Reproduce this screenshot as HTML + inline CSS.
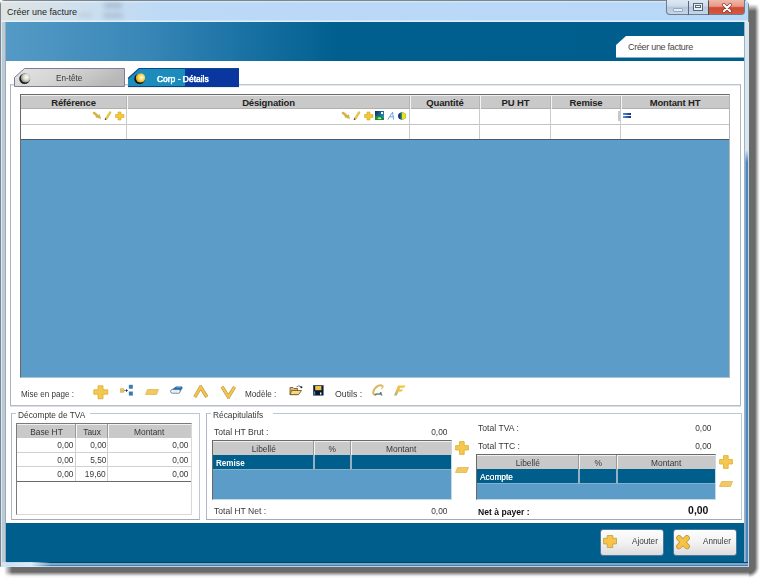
<!DOCTYPE html>
<html><head><meta charset="utf-8">
<style>
*{margin:0;padding:0;box-sizing:border-box}
html,body{width:760px;height:580px;overflow:hidden;background:#fff;font-family:"Liberation Sans",sans-serif;font-size:9px;color:#383838;position:relative}
.a{position:absolute}
.t{position:absolute;white-space:nowrap;line-height:11px;font-size:9.5px;letter-spacing:0}
.s{display:inline-block}
.b{font-weight:bold;letter-spacing:0;color:#222}
/* frame */
#shR{left:749px;top:4px;width:11px;height:563px;-webkit-mask-image:linear-gradient(180deg,transparent 0,#000 7px);background:linear-gradient(90deg,#6a6a6a 0,#6a6a6a 6px,#b0b0b0 8px,#f0f0f0 10px,#fff 11px)}
#shC{left:749px;top:567px;width:11px;height:11px;background:radial-gradient(circle at 0 0,#6a6a6a 0,#6a6a6a 6px,#b0b0b0 8px,#f0f0f0 10px,#fff 11px)}
#shB{left:4px;top:567px;width:745px;height:11px;background:linear-gradient(180deg,#6a6a6a 0,#6a6a6a 5px,#b0b0b0 7px,#f0f0f0 9px,#fff 11px);-webkit-mask-image:linear-gradient(90deg,transparent 0,#000 8px)}
#win{left:0;top:0;width:749px;height:567px;background:#c4d8ea;border:1px solid #7c8690;border-radius:4px 5px 0 0}
#title{left:1px;top:1px;width:747px;height:21px;background:linear-gradient(180deg,rgba(255,255,255,.5) 0,rgba(255,255,255,0) 2px,rgba(255,255,255,0) 19px,rgba(235,245,255,.8) 20px),linear-gradient(90deg,#dfe4e2 0%,#cfe0ee 10%,#bcd9f6 22%,#b8d8f8 100%)}
#frL{left:1px;top:22px;width:5px;height:545px;background:linear-gradient(90deg,#dce6ee 0,#dce6ee 1px,#b8ccd8 1px,#b8ccd8 4px,#a0a8b8 4px)}
#frR{left:744px;top:22px;width:5px;height:545px;background:linear-gradient(90deg,#a0b0c0 0,#a0b0c0 1px,rgba(0,0,0,0) 1px),linear-gradient(180deg,#d8e6f2 0,#d8e6f2 128px,rgba(216,230,242,0) 140px),linear-gradient(90deg,#8aa0b8 0,#8aa0b8 1px,#80a8d0 1px,#80a8d0 2px,#4a88c0 2px,#4a88c0 4px,#c0d8e8 4px)}
#frB{left:1px;top:562px;width:747px;height:5px;border-radius:0 0 0 3px;background:linear-gradient(90deg,rgba(214,228,238,1) 0,rgba(214,228,238,1) 5px,rgba(220,236,250,.85) 6px,rgba(230,244,255,.9) 30px,rgba(210,230,248,0) 50px),linear-gradient(180deg,#0a4060 0,#0a4060 1px,#78aad0 1px,#78aad0 3px,#4a80b0 3px,#4a80b0 4px,#b8d4f0 4px)}
#client{left:6px;top:22px;width:738px;height:540px;background:#fff}
#hdr{left:6px;top:22px;width:738px;height:39px;background:linear-gradient(90deg,#559ac6 0%,#3a88b8 18%,#1a72a4 32%,#005f8e 45%,#005e8d 100%)}
#foot{left:6px;top:523px;width:738px;height:39px;background:#005e8c}
.btnw{top:0;height:15px;border:1px solid #6e7c8c;border-top:none}
</style></head><body>
<div class="a" id="shR"></div>
<div class="a" id="shB"></div><div class="a" id="shC"></div>
<div class="a" id="win"></div>
<div class="a" id="title"></div>
<div class="a" id="frL"></div>
<div class="a" style="left:104px;top:3px;width:18px;height:5px;background:#6a7a90;filter:blur(2.5px);opacity:.35"></div><div class="a" style="left:103px;top:13px;width:20px;height:5px;background:#6a7a90;filter:blur(2.5px);opacity:.3"></div><div class="a" style="left:78px;top:13px;width:14px;height:4px;background:#8a9aaa;filter:blur(2.5px);opacity:.25"></div>
<div class="a" id="frR"></div>
<div class="a" id="frB"></div>
<div class="t" style="left:7px;top:7px;font-size:9px;letter-spacing:0;color:#1e1e1e">Créer une facture</div>
<!-- caption buttons -->
<div class="a btnw" style="left:666px;width:23px;border-radius:0 0 0 4px;background:linear-gradient(180deg,#dfe9f4 0%,#cbdaea 45%,#b4c8de 50%,#c4d6ea 100%)"></div>
<div class="a" style="left:673px;top:8px;width:10px;height:4px;background:#e4ecf4;border:1px solid #9aaabe;border-radius:1px"></div>
<div class="a btnw" style="left:688px;width:21px;border-left:none;background:linear-gradient(180deg,#dfe9f4 0%,#cbdaea 45%,#b4c8de 50%,#c4d6ea 100%)"></div>
<div class="a" style="left:693px;top:3px;width:10px;height:8px;border:1px solid #596878;background:#e6eef6"></div>
<div class="a" style="left:695px;top:5px;width:6px;height:3px;border:1px solid #596878;background:#fff"></div>
<div class="a btnw" style="left:708px;width:37px;border-radius:0 0 4px 0;background:linear-gradient(180deg,#f0b8a8 0%,#e8988a 45%,#d04a32 55%,#d45a40 100%)"></div>
<div class="a" style="left:688px;top:1px;width:1px;height:14px;background:#5a6878"></div><div class="a" style="left:708px;top:1px;width:1px;height:14px;background:#4a4a58"></div>
<svg class="a" style="left:722px;top:3px" width="10" height="10" viewBox="0 0 10 10"><path d="M1.8 1.8 L8.2 8.2 M8.2 1.8 L1.8 8.2" stroke="#6a3028" stroke-width="3.4" stroke-linecap="round" opacity=".8"/><path d="M1.8 1.8 L8.2 8.2 M8.2 1.8 L1.8 8.2" stroke="#fff" stroke-width="2" stroke-linecap="round"/></svg>

<div class="a" id="client"></div>
<div class="a" id="hdr"></div>
<svg class="a" style="left:616px;top:36px" width="128" height="22" viewBox="0 0 128 22"><path d="M0 9 L10 0 L128 0 L128 21.5 L0 21.5 Z" fill="#fff"/></svg>
<div class="t" style="left:628px;top:42px;font-size:9px;color:#4a4444;letter-spacing:-0.3px">Créer une facture</div>
<div class="a" id="foot"></div>

<!-- tab panel border -->
<div class="a" style="left:10px;top:84px;width:731px;height:322px;border:1px solid #a8b4c4;border-top-color:#bcc8d4;border-bottom-color:#b8bcc8;box-shadow:0 1px 0 #dcdee6, inset 0 1px 0 #e4e8ee"></div>
<!-- tabs -->
<svg class="a" style="left:13px;top:67px" width="114" height="22" viewBox="0 0 114 22">
 <defs><linearGradient id="gt" x1="0" y1="0" x2="1" y2=".3"><stop offset="0" stop-color="#e4e4e4"/><stop offset=".5" stop-color="#d4d4d4"/><stop offset="1" stop-color="#b8b8b8"/></linearGradient>
 <radialGradient id="bg1" cx=".6" cy=".42" r=".7"><stop offset="0" stop-color="#fffff4"/><stop offset=".45" stop-color="#d8d8d0"/><stop offset="1" stop-color="#707070"/></radialGradient></defs>
 <path d="M1.5 10.5 L11.5 1.5 L111.5 1.5 L111.5 19.5 L1.5 19.5 Z" fill="url(#gt)" stroke="#7c7c9c" stroke-width="1"/>
 <circle cx="12" cy="11.3" r="5.6" fill="#c8c8c4" opacity=".6"/>
 <circle cx="11.6" cy="11.8" r="5.3" fill="#1a1a1a"/>
 <circle cx="12.5" cy="10.9" r="4.7" fill="url(#bg1)"/>
</svg>
<div class="t" style="left:56px;top:72px;color:#3a3a3a"><span class="s" style="transform:scaleX(0.86);transform-origin:left">En-tête</span></div>
<svg class="a" style="left:127px;top:67px" width="114" height="22" viewBox="0 0 114 22">
 <defs><radialGradient id="bg2" cx=".6" cy=".45" r=".65"><stop offset="0" stop-color="#fffef0"/><stop offset=".4" stop-color="#fce070"/><stop offset="1" stop-color="#d09010"/></radialGradient></defs>
 <path d="M1 11.5 L12 1.5 L58 1.5 L58 20 L1 20 Z" fill="#1b8cbc"/>
 <path d="M58 1.5 L112 1.5 L112 20 L58 20 Z" fill="#0a36a0"/>
 <path d="M1 11.5 L12 1.5 L112 1.5" stroke="#0a4a8a" stroke-width="1.1" fill="none"/>
 <path d="M1 19.6 L112 19.6" stroke="#0a3a80" stroke-width="1" fill="none"/>
 <circle cx="12.6" cy="11.8" r="5.3" fill="#101010"/>
 <circle cx="13.5" cy="10.9" r="4.7" fill="url(#bg2)"/>
</svg>
<div class="t" style="left:157px;top:73px;color:#fff;font-size:9.5px;text-shadow:0 0 1px #a0d8ff,0 0 .5px #fff"><span class="s" style="transform:scaleX(0.89);transform-origin:left;-webkit-text-stroke:.25px #fff">Corp - Détails</span></div>

<!-- main table -->
<div class="a" style="left:20px;top:94px;width:710px;height:284px;background:#5b9dc8;border:1px solid #6a6a6a;border-right-color:#b4b4b4;border-bottom-color:#a8c4d8"></div>
<div class="a" style="left:21px;top:95px;width:708px;height:14px;background:#c9c9c9;border-top:1px solid #f0f0f0;border-bottom:1px solid #b0b0b0"></div>
<div class="a" style="left:21px;top:109px;width:708px;height:30px;background:#fff"></div>
<div class="a" style="left:21px;top:124px;width:708px;height:1px;background:#c4c4c4"></div>
<div class="a" style="left:21px;top:139px;width:708px;height:1px;background:#4a5a66"></div>
<div class="a" style="left:126px;top:96px;width:1px;height:13px;background:#b4b4b4"></div><div class="a" style="left:127px;top:96px;width:1px;height:13px;background:#f4f4f4"></div>
<div class="a" style="left:126px;top:109px;width:1px;height:30px;background:#cccccc"></div>
<div class="a" style="left:409px;top:96px;width:1px;height:13px;background:#b4b4b4"></div><div class="a" style="left:410px;top:96px;width:1px;height:13px;background:#f4f4f4"></div>
<div class="a" style="left:409px;top:109px;width:1px;height:30px;background:#cccccc"></div>
<div class="a" style="left:479px;top:96px;width:1px;height:13px;background:#b4b4b4"></div><div class="a" style="left:480px;top:96px;width:1px;height:13px;background:#f4f4f4"></div>
<div class="a" style="left:479px;top:109px;width:1px;height:30px;background:#cccccc"></div>
<div class="a" style="left:550px;top:96px;width:1px;height:13px;background:#b4b4b4"></div><div class="a" style="left:551px;top:96px;width:1px;height:13px;background:#f4f4f4"></div>
<div class="a" style="left:550px;top:109px;width:1px;height:30px;background:#cccccc"></div>
<div class="a" style="left:620px;top:96px;width:1px;height:13px;background:#b4b4b4"></div><div class="a" style="left:621px;top:96px;width:1px;height:13px;background:#f4f4f4"></div>
<div class="a" style="left:620px;top:109px;width:1px;height:30px;background:#cccccc"></div>
<div class="t b" style="left:20px;top:96.5px;width:107px;text-align:center;font-size:9.5px;letter-spacing:-0.15px">Référence</div>
<div class="t b" style="left:127px;top:96.5px;width:283px;text-align:center;font-size:9.5px;letter-spacing:-0.15px">Désignation</div>
<div class="t b" style="left:410px;top:96.5px;width:70px;text-align:center;font-size:9.5px;letter-spacing:-0.15px">Quantité</div>
<div class="t b" style="left:480px;top:96.5px;width:71px;text-align:center;font-size:9.5px;letter-spacing:-0.15px">PU HT</div>
<div class="t b" style="left:551px;top:96.5px;width:70px;text-align:center;font-size:9.5px;letter-spacing:-0.15px">Remise</div>
<div class="t b" style="left:621px;top:96.5px;width:108px;text-align:center;font-size:9.5px;letter-spacing:-0.15px">Montant HT</div>

<!-- row icons -->
<svg class="a" style="left:92px;top:111px" width="34" height="10" viewBox="0 0 34 10">
 <path d="M2 2 Q3.5 2.5 5 4.8" stroke="#d4b448" stroke-width="2.6" fill="none" stroke-linecap="round"/>
 <path d="M3.8 6 L7.5 3.6 L8.6 7.6 Z" fill="#d8b848" stroke="#c8a030" stroke-width=".5" stroke-linejoin="round"/>
 <path d="M18 1.6 L14.2 7.6" stroke="#e8c040" stroke-width="2.6" stroke-linecap="round"/><path d="M17 1.6 L13.6 7" stroke="#f4e090" stroke-width=".7"/>
 <path d="M13.2 8.8 L13.8 7.5" stroke="#223366" stroke-width="1.2"/>
 <path d="M26 1 H29 V3.5 H32 V6.5 H29 V9 H26 V6.5 H23.5 V3.5 H26 Z" fill="#f0c838" stroke="#d8a820" stroke-width=".6"/>
</svg>
<svg class="a" style="left:341px;top:110px" width="66" height="11" viewBox="0 0 66 11">
 <path d="M2 3 Q3.5 3.5 5 5.8" stroke="#d4b448" stroke-width="2.6" fill="none" stroke-linecap="round"/>
 <path d="M3.8 7 L7.5 4.6 L8.6 8.6 Z" fill="#d8b848" stroke="#c8a030" stroke-width=".5" stroke-linejoin="round"/>
 <path d="M18 2.6 L14.2 8.6" stroke="#e8c040" stroke-width="2.6" stroke-linecap="round"/><path d="M17 2.6 L13.6 8" stroke="#f4e090" stroke-width=".7"/>
 <path d="M13.2 9.8 L13.8 8.5" stroke="#223366" stroke-width="1.2"/>
 <path d="M26 2 H29 V4.5 H32 V7.5 H29 V10 H26 V7.5 H23.5 V4.5 H26 Z" fill="#f0c838" stroke="#d8a820" stroke-width=".6"/>
 <defs><linearGradient id="ig" x1="0" y1="0" x2="1" y2=".6"><stop offset="0" stop-color="#0a2a5a"/><stop offset="1" stop-color="#2a90c0"/></linearGradient></defs><rect x="34" y="1" width="9" height="9" fill="url(#ig)"/>
 <path d="M34 10 V6.5 C36 5 38 5.5 43 8 V10 Z" fill="#1a8a3a"/><ellipse cx="38.5" cy="8.3" rx="2" ry="1" fill="#a8e0a0"/>
 <rect x="40" y="2" width="2" height="2" fill="#fff"/>
 <path d="M46.8 9.6 L51.6 2.2 L52.6 9.6 M48.8 6.8 L52.3 6.8" stroke="#5a9ad8" stroke-width=".9" fill="none"/>
 <ellipse cx="61" cy="6" rx="4" ry="3.6" fill="#1a2a9a"/>
 <path d="M61 2.4 A4 3.6 0 0 1 61 9.6 Z" fill="#e8e020"/>
 <path d="M59.5 2.6 L61 2.4 L61 9.6 L59.5 9.3 Z" fill="#2a9a30"/>
</svg>
<div class="a" style="left:618px;top:111px;width:2px;height:10px;background:#c8c8c8"></div>
<div class="a" style="left:623px;top:113px;width:8px;height:2px;background:linear-gradient(90deg,#4a9ad8,#1a2a7a)"></div>
<div class="a" style="left:623px;top:116px;width:8px;height:2px;background:linear-gradient(90deg,#4a9ad8,#1a2a7a)"></div>

<!-- toolbar -->
<div class="t" style="left:21px;top:388px"><span class="s" style="transform:scaleX(0.85);transform-origin:left">Mise en page :</span></div>
<svg class="a" style="left:93px;top:385px" width="16" height="15" viewBox="0 0 16 15">
 <path d="M5 .8 H10 V4.8 H14.8 V9.2 H10 V13.8 H5 V9.2 H.8 V4.8 H5 Z" fill="#f4c850" stroke="#e0ac30" stroke-width=".8"/>
</svg>
<svg class="a" style="left:120px;top:384px" width="14" height="12" viewBox="0 0 14 12">
 <rect x="9" y="1" width="3.8" height="3.6" fill="#3a7aaa" stroke="#5a90b8" stroke-width=".4"/><rect x="9" y="7.8" width="3.8" height="3.6" fill="#3a7aaa" stroke="#5a90b8" stroke-width=".4"/>
 <rect x=".5" y="4.8" width="3.4" height="3.4" fill="#e8c060" stroke="#c8a040" stroke-width=".5"/>
 <path d="M4 6.5 H7" stroke="#6a7a9a" stroke-width=".8"/><path d="M6 5 L8 6.5 L6 8 Z" fill="#101a60"/>
</svg>
<svg class="a" style="left:145px;top:389px" width="14" height="6" viewBox="0 0 14 6"><path d="M2.5 .5 H13.5 L11.5 5.5 H.5 Z" fill="#f4c860" stroke="#d8a838" stroke-width=".6"/></svg>
<svg class="a" style="left:170px;top:386px" width="13" height="8" viewBox="0 0 13 8">
 <path d="M2 3.5 L6 .4 H11.8 Q13 .8 12.4 2.4 L10 5.5 L9 6 Z" fill="#2a6cac"/><path d="M6.5 1.2 H11" stroke="#7ab0e0" stroke-width=".8"/>
 <path d="M2.5 3.4 H9 Q10.2 3.4 10.2 5 Q10.2 7.2 8.8 7.2 H2.5 Q.6 7.2 .6 5.3 Q.6 3.4 2.5 3.4 Z" fill="#f8fafc" stroke="#4a6a90" stroke-width=".8"/>
 <path d="M3 5 H8" stroke="#c8d4e0" stroke-width=".8"/>
</svg>
<svg class="a" style="left:193px;top:385px" width="16" height="14" viewBox="0 0 16 14"><path d="M1.8 12.2 L7.7 2 L13.8 12" stroke="#b09040" stroke-width="3.4" fill="none" stroke-linejoin="miter" stroke-miterlimit="3"/><path d="M1.8 12.2 L7.7 2 L13.8 12" stroke="#f4c450" stroke-width="2.4" fill="none" stroke-linejoin="miter" stroke-miterlimit="3"/></svg>
<svg class="a" style="left:220px;top:385px" width="16" height="14" viewBox="0 0 16 14"><path d="M2 1.6 L8.4 12 L14.6 1.8" stroke="#b09040" stroke-width="3.4" fill="none" stroke-linejoin="miter" stroke-miterlimit="3"/><path d="M2 1.6 L8.4 12 L14.6 1.8" stroke="#f4c450" stroke-width="2.4" fill="none" stroke-linejoin="miter" stroke-miterlimit="3"/></svg>
<div class="t" style="left:245px;top:388px"><span class="s" style="transform:scaleX(0.86);transform-origin:left">Modèle :</span></div>
<svg class="a" style="left:289px;top:385px" width="14" height="11" viewBox="0 0 14 11">
 <path d="M1 2.5 H4 L5 3.5 H8.5 V9.6 H1 Z" fill="#e0b860" stroke="#6a5020" stroke-width=".8"/>
 <path d="M2.6 5.5 H12.5 L9.6 9.6 H1 Z" fill="#f4d888" stroke="#6a5020" stroke-width=".8" stroke-linejoin="round"/>
 <path d="M7.5 2 Q9.5 -.2 12 1.6" stroke="#555" stroke-width=".8" fill="none"/>
 <circle cx="12.4" cy="2.3" r="1" fill="#101830"/>
</svg>
<svg class="a" style="left:313px;top:385px" width="11" height="11" viewBox="0 0 11 11">
 <rect x=".3" y=".3" width="10" height="10" fill="#0a1830" stroke="#2a4a6a" stroke-width=".5"/>
 <rect x="2.2" y="1" width="6.2" height="4.2" fill="#f4c040"/>
 <rect x="1" y="6.4" width="1.2" height="3.4" fill="#3a90b0"/>
 <rect x="7" y="7.4" width="1.4" height="2.2" fill="#e8f0f4"/>
</svg>
<div class="t" style="left:335px;top:388px"><span class="s" style="transform:scaleX(0.92);transform-origin:left">Outils :</span></div>
<svg class="a" style="left:371px;top:384px" width="14" height="13" viewBox="0 0 14 13">
 <path d="M11.5 2.2 Q10 .4 7 1.8 Q3 4 2.2 8 Q2 10.6 4.5 10.8" stroke="#d8b860" stroke-width="1.9" fill="none" stroke-linecap="round"/>
 <path d="M11.8 2 Q12.2 3.5 10.6 4.6" stroke="#e0c070" stroke-width="1.4" fill="none" stroke-linecap="round"/>
 <path d="M4.2 10.6 Q6 9.2 8 10.2 Q9.5 9.6 10 8.2 V10.8 L11 11" stroke="#4a7060" stroke-width="1.2" fill="none" stroke-linecap="round"/>
</svg>
<svg class="a" style="left:393px;top:385px" width="13" height="11" viewBox="0 0 13 11">
 <defs><linearGradient id="fg" x1="1" y1="0" x2="0" y2="1"><stop offset="0" stop-color="#f8c830"/><stop offset=".55" stop-color="#e8c050"/><stop offset="1" stop-color="#a8a890"/></linearGradient></defs>
 <path d="M5 .5 H12.5 L11.3 2.8 H7.2 L6.5 4.4 H10 L8.9 6.5 H5.7 L3.8 10.5 H1 Z" fill="url(#fg)"/>
</svg>

<!-- group boxes -->
<div class="a" style="left:11px;top:413px;width:189px;height:107px;border:1px solid #b8c8d8;border-bottom-color:#a8a8b0;border-left-color:#b0b8c4"></div>
<div class="a" style="left:16px;top:409px;width:74px;height:10px;background:#fff"></div>
<div class="t" style="left:18px;top:408.5px"><span class="s" style="transform:scaleX(0.877);transform-origin:left">Décompte de TVA</span></div>
<div class="a" style="left:206px;top:413px;width:536px;height:107px;border:1px solid #b8c8d8;border-bottom-color:#a8a8b0;border-left-color:#b0b8c4"></div>
<div class="a" style="left:211px;top:409px;width:62px;height:10px;background:#fff"></div>
<div class="t" style="left:213px;top:408.5px"><span class="s" style="transform:scaleX(0.88);transform-origin:left">Récapitulatifs</span></div>

<!-- TVA table -->
<div class="a" style="left:16px;top:423px;width:176px;height:92px;background:#fff;border:1px solid #7a7a7a;border-right-color:#d8d8d8;border-bottom-color:#d8d8d8"></div>
<div class="a" style="left:17px;top:424px;width:174px;height:14px;background:#c9c9c9;border-top:1px solid #f0f0f0"></div>
<div class="a" style="left:17px;top:452px;width:174px;height:1px;background:#d0d0d0"></div>
<div class="a" style="left:17px;top:466px;width:174px;height:1px;background:#d0d0d0"></div>
<div class="a" style="left:17px;top:481px;width:174px;height:1px;background:#6a6a6a"></div>
<div class="a" style="left:75px;top:424px;width:1px;height:14px;background:#9a9a9a"></div><div class="a" style="left:76px;top:424px;width:1px;height:14px;background:#f4f4f4"></div>
<div class="a" style="left:75px;top:438px;width:1px;height:43px;background:#d0d0d0"></div>
<div class="a" style="left:107px;top:424px;width:1px;height:14px;background:#9a9a9a"></div><div class="a" style="left:108px;top:424px;width:1px;height:14px;background:#f4f4f4"></div>
<div class="a" style="left:107px;top:438px;width:1px;height:43px;background:#d0d0d0"></div>
<div class="t" style="left:17px;top:425.5px;width:59px;text-align:center"><span class="s" style="transform:scaleX(0.88);transform-origin:center">Base HT</span></div>
<div class="t" style="left:76px;top:425.5px;width:32px;text-align:center"><span class="s" style="transform:scaleX(0.88);transform-origin:center">Taux</span></div>
<div class="t" style="left:108px;top:425.5px;width:83px;text-align:center"><span class="s" style="transform:scaleX(0.88);transform-origin:center">Montant</span></div>
<div class="t" style="left:17px;top:439px;width:56px;text-align:right"><span class="s" style="transform:scaleX(0.88);transform-origin:right">0,00</span></div><div class="t" style="left:76px;top:439px;width:30px;text-align:right"><span class="s" style="transform:scaleX(0.88);transform-origin:right">0,00</span></div><div class="t" style="left:108px;top:439px;width:80px;text-align:right"><span class="s" style="transform:scaleX(0.88);transform-origin:right">0,00</span></div>
<div class="t" style="left:17px;top:453.5px;width:56px;text-align:right"><span class="s" style="transform:scaleX(0.88);transform-origin:right">0,00</span></div><div class="t" style="left:76px;top:453.5px;width:30px;text-align:right"><span class="s" style="transform:scaleX(0.88);transform-origin:right">5,50</span></div><div class="t" style="left:108px;top:453.5px;width:80px;text-align:right"><span class="s" style="transform:scaleX(0.88);transform-origin:right">0,00</span></div>
<div class="t" style="left:17px;top:468px;width:56px;text-align:right"><span class="s" style="transform:scaleX(0.88);transform-origin:right">0,00</span></div><div class="t" style="left:76px;top:468px;width:30px;text-align:right"><span class="s" style="transform:scaleX(0.88);transform-origin:right">19,60</span></div><div class="t" style="left:108px;top:468px;width:80px;text-align:right"><span class="s" style="transform:scaleX(0.88);transform-origin:right">0,00</span></div>

<!-- recap left -->
<div class="t" style="left:214px;top:426px"><span class="s" style="transform:scaleX(0.9);transform-origin:left">Total HT Brut :</span></div>
<div class="t" style="left:400px;top:426px;width:47px;text-align:right"><span class="s" style="transform:scaleX(0.88);transform-origin:right">0,00</span></div>
<div class="a" style="left:212px;top:440px;width:240px;height:60px;background:#5b9dc8;border:1px solid #6a6a6a;border-right-color:#c8d8e4;border-bottom-color:#c8d8e4"></div>
<div class="a" style="left:213px;top:441px;width:238px;height:14px;background:#c9c9c9;border-top:1px solid #f0f0f0"></div>
<div class="a" style="left:213px;top:455px;width:238px;height:15px;background:#005e8c;border-bottom:1px solid #8ab0c8"></div>
<div class="t" style="left:213px;top:442.5px;width:101px;text-align:center"><span class="s" style="transform:scaleX(0.88);transform-origin:center">Libellé</span></div>
<div class="t" style="left:314px;top:442.5px;width:37px;text-align:center"><span class="s" style="transform:scaleX(0.88);transform-origin:center">%</span></div>
<div class="t" style="left:351px;top:442.5px;width:100px;text-align:center"><span class="s" style="transform:scaleX(0.88);transform-origin:center">Montant</span></div>
<div class="t b" style="left:216px;top:456.5px;color:#fff"><span class="s" style="transform:scaleX(0.85);transform-origin:left">Remise</span></div>
<div class="t" style="left:214px;top:505px"><span class="s" style="transform:scaleX(0.9);transform-origin:left">Total HT Net :</span></div>
<div class="t" style="left:400px;top:505px;width:47px;text-align:right"><span class="s" style="transform:scaleX(0.88);transform-origin:right">0,00</span></div>
<div class="a" style="left:313px;top:441px;width:1px;height:14px;background:#9a9a9a"></div><div class="a" style="left:314px;top:441px;width:1px;height:14px;background:#f4f4f4"></div>
<div class="a" style="left:313px;top:455px;width:2px;height:14px;background:#98b0c4"></div>
<div class="a" style="left:350px;top:441px;width:1px;height:14px;background:#9a9a9a"></div><div class="a" style="left:351px;top:441px;width:1px;height:14px;background:#f4f4f4"></div>
<div class="a" style="left:350px;top:455px;width:2px;height:14px;background:#98b0c4"></div>

<svg class="a" style="left:455px;top:441px" width="14" height="14" viewBox="0 0 14 14"><path d="M4.5 .6 H9.2 V4.6 H13.4 V9 H9.2 V13.4 H4.5 V9 H.6 V4.6 H4.5 Z" fill="#f4c850" stroke="#e0ac30" stroke-width=".8"/></svg>
<svg class="a" style="left:455px;top:467px" width="14" height="6" viewBox="0 0 14 6"><path d="M2.5 .5 H13.5 L11.5 5.5 H.5 Z" fill="#f4c860" stroke="#d8a838" stroke-width=".6"/></svg>

<!-- recap right -->
<div class="t" style="left:478px;top:421.5px"><span class="s" style="transform:scaleX(0.905);transform-origin:left">Total TVA :</span></div>
<div class="t" style="left:660px;top:421.5px;width:51px;text-align:right"><span class="s" style="transform:scaleX(0.88);transform-origin:right">0,00</span></div>
<div class="t" style="left:478px;top:439.5px"><span class="s" style="transform:scaleX(0.905);transform-origin:left">Total TTC :</span></div>
<div class="t" style="left:660px;top:439.5px;width:51px;text-align:right"><span class="s" style="transform:scaleX(0.88);transform-origin:right">0,00</span></div>
<div class="a" style="left:476px;top:454px;width:240px;height:46px;background:#5b9dc8;border:1px solid #6a6a6a;border-right-color:#c8d8e4;border-bottom-color:#c8d8e4"></div>
<div class="a" style="left:477px;top:455px;width:238px;height:14px;background:#c9c9c9;border-top:1px solid #f0f0f0"></div>
<div class="a" style="left:477px;top:469px;width:238px;height:15px;background:#005e8c;border-bottom:1px solid #8ab0c8"></div>
<div class="t" style="left:477px;top:456.5px;width:102px;text-align:center"><span class="s" style="transform:scaleX(0.88);transform-origin:center">Libellé</span></div>
<div class="t" style="left:579px;top:456.5px;width:38px;text-align:center"><span class="s" style="transform:scaleX(0.88);transform-origin:center">%</span></div>
<div class="t" style="left:617px;top:456.5px;width:98px;text-align:center"><span class="s" style="transform:scaleX(0.88);transform-origin:center">Montant</span></div>
<div class="t" style="left:480px;top:471px;color:#fff;text-shadow:0 0 .5px #fff"><span class="s" style="transform:scaleX(0.88);transform-origin:left">Acompte</span></div>
<div class="t b" style="left:478px;top:505.5px;color:#111"><span class="s" style="transform:scaleX(0.905);transform-origin:left">Net à payer :</span></div>
<div class="t b" style="left:650px;top:505px;width:58px;text-align:right;color:#111;font-size:11px"><span class="s" style="transform:scaleX(0.95);transform-origin:right">0,00</span></div>
<div class="a" style="left:578px;top:455px;width:1px;height:14px;background:#9a9a9a"></div><div class="a" style="left:579px;top:455px;width:1px;height:14px;background:#f4f4f4"></div>
<div class="a" style="left:578px;top:469px;width:2px;height:14px;background:#98b0c4"></div>
<div class="a" style="left:616px;top:455px;width:1px;height:14px;background:#9a9a9a"></div><div class="a" style="left:617px;top:455px;width:1px;height:14px;background:#f4f4f4"></div>
<div class="a" style="left:616px;top:469px;width:2px;height:14px;background:#98b0c4"></div>

<svg class="a" style="left:719px;top:455px" width="14" height="14" viewBox="0 0 14 14"><path d="M4.5 .6 H9.2 V4.6 H13.4 V9 H9.2 V13.4 H4.5 V9 H.6 V4.6 H4.5 Z" fill="#f4c850" stroke="#e0ac30" stroke-width=".8"/></svg>
<svg class="a" style="left:719px;top:481px" width="14" height="6" viewBox="0 0 14 6"><path d="M2.5 .5 H13.5 L11.5 5.5 H.5 Z" fill="#f4c860" stroke="#d8a838" stroke-width=".6"/></svg>

<!-- footer buttons -->
<div class="a" style="left:600px;top:529px;width:64px;height:27px;border-radius:3px;background:linear-gradient(180deg,#fdfdfd 0%,#f2f2f2 50%,#dcdcdc 100%);border:1px solid #4a7aa0"></div>
<svg class="a" style="left:603px;top:535px" width="14" height="13" viewBox="0 0 14 13"><path d="M4.2 .5 H9.8 V3.3 H13.5 V8.9 H9.8 V12.5 H4.2 V8.9 H.5 V3.3 H4.2 Z" fill="#f8c448" stroke="#c0a040" stroke-width=".8" stroke-linejoin="round"/></svg>
<div class="t" style="left:632px;top:535px;color:#3a3a3a"><span class="s" style="transform:scaleX(0.86);transform-origin:left">Ajouter</span></div>
<div class="a" style="left:673px;top:529px;width:64px;height:27px;border-radius:3px;background:linear-gradient(180deg,#fdfdfd 0%,#f2f2f2 50%,#dcdcdc 100%);border:1px solid #4a7aa0"></div>
<svg class="a" style="left:675px;top:534px" width="16" height="16" viewBox="0 0 16 16"><path d="M4 4 L12 12.4 M12 4 L4 12.4" stroke="#a89040" stroke-width="5.6" stroke-linecap="round"/><path d="M4 4 L12 12.4 M12 4 L4 12.4" stroke="#f8c040" stroke-width="4.4" stroke-linecap="round"/><circle cx="8" cy="8.2" r="2.6" fill="#f8c448"/></svg>
<div class="t" style="left:703px;top:535px;color:#3a3a3a"><span class="s" style="transform:scaleX(0.85);transform-origin:left">Annuler</span></div>
</body></html>
